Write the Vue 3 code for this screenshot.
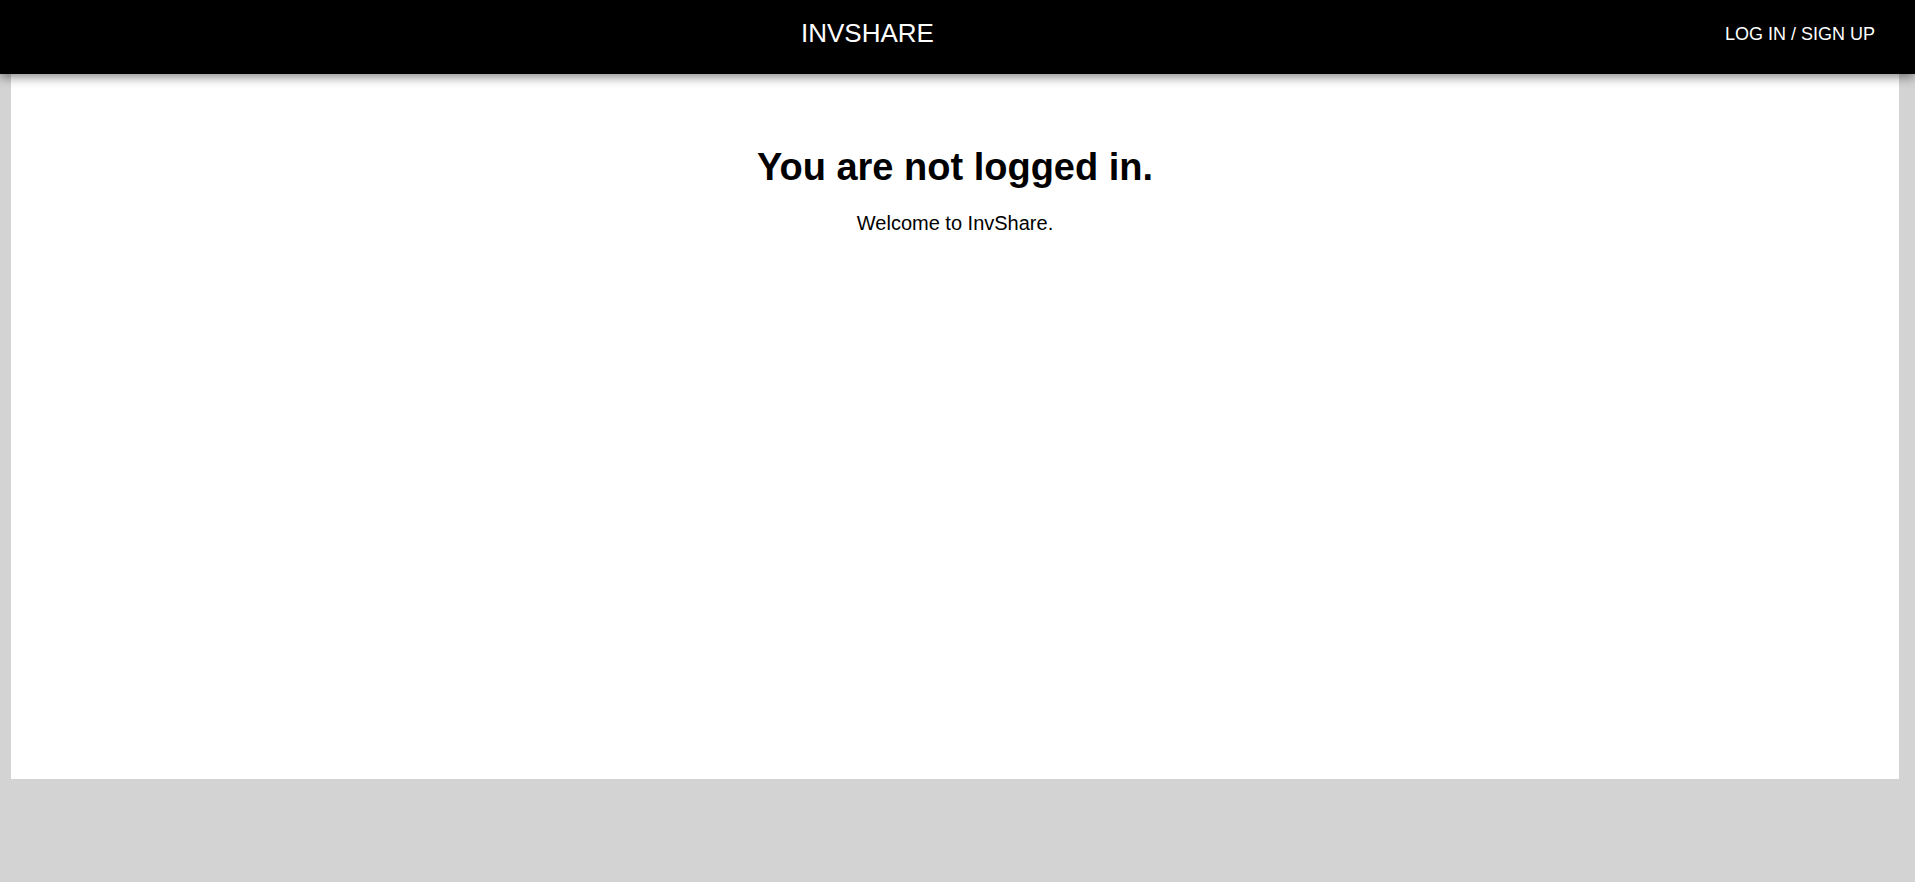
<script setup>
const brand = 'InvShare'
</script>

<template>
  <div class="page">
    <header class="bar">
      <h2 class="brand">{{ brand }}</h2>
      <button type="button" class="login">Log in / Sign up</button>
    </header>
    <main class="content">
      <h1>You are not logged in.</h1>
      <p>Welcome to {{ brand }}.</p>
    </main>
  </div>
</template>

<style>
body {
  background: #d3d3d3;
}
</style>

<style scoped>
.page {
  font-family: "Liberation Sans", Arial, sans-serif;
  color: #000;
}

.bar {
  position: relative;
  display: flex;
  align-items: flex-start;
  box-sizing: border-box;
  padding: 16px 24px 16px 26px;
  min-height: 74px;
  background: #000;
  color: #fff;
  text-transform: uppercase;
  box-shadow: 0 3px 10px rgba(0, 0, 0, 0.48);
}

.brand {
  flex: 1;
  margin: 0;
  font-size: 26px;
  font-weight: 400;
  line-height: 34px;
  text-align: center;
}

.login {
  border: 0;
  padding: 0 16px;
  background: none;
  color: inherit;
  font: inherit;
  font-size: 18px;
  line-height: 36px;
  text-transform: inherit;
  cursor: pointer;
}

.content {
  min-height: calc(80vh - 1px);
  margin: 0 16px 0 11px;
  box-sizing: border-box;
  padding-top: 70px;
  background: #fff;
  text-align: center;
}

h1 {
  margin: 0;
  font-size: 38px;
  line-height: 46px;
}

p {
  margin: 19px 0 0;
  font-size: 20px;
  line-height: 28px;
}
</style>
